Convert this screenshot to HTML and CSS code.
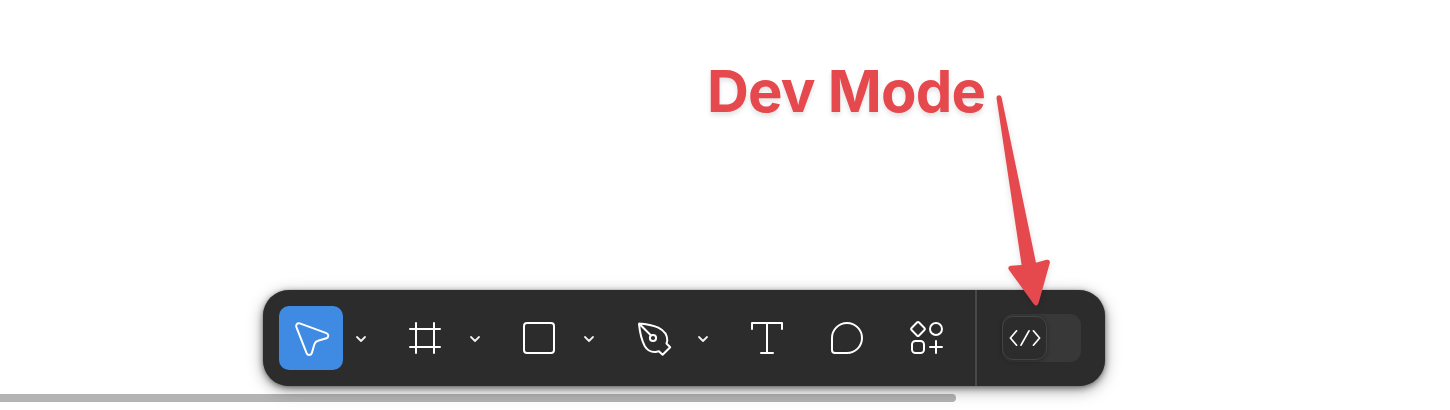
FILE: index.html
```html
<!DOCTYPE html>
<html lang="en">
<head>
<meta charset="utf-8">
<title>Dev Mode toolbar</title>
<link rel="stylesheet" href="styles.css">
</head>
<body>
<main class="canvas">
  <h1 class="callout">Dev Mode</h1>
  <nav class="toolbar">
    <div class="tools">
      <div class="tool-group">
        <button class="tool active" aria-label="Move"><svg class="icon" viewBox="0 0 64 64"><path d="M17.4 21.2C16.5 18.7 18.2 16.5 20.8 17.4L47.4 27.1C50 28.2 50 31.5 47.4 32.3L39 34.8Q36.3 35.6 35.4 38.3L32.9 46.8C32 49.8 28.6 49.6 27.6 47.1Z"/></svg></button>
        <button class="more" aria-label="More move tools"><svg class="chevron" viewBox="0 0 12 8"><path d="M2 2l4 4 4-4"/></svg></button>
      </div>
      <div class="tool-group">
        <button class="tool" aria-label="Frame"><svg class="icon" viewBox="0 0 64 64"><path d="M23 17v30M41 17v30M17 23h30M17 41h30"/></svg></button>
        <button class="more" aria-label="More frame tools"><svg class="chevron" viewBox="0 0 12 8"><path d="M2 2l4 4 4-4"/></svg></button>
      </div>
      <div class="tool-group">
        <button class="tool" aria-label="Rectangle"><svg class="icon" viewBox="0 0 64 64"><rect x="17" y="17" width="30" height="30" rx="3"/></svg></button>
        <button class="more" aria-label="More shapes"><svg class="chevron" viewBox="0 0 12 8"><path d="M2 2l4 4 4-4"/></svg></button>
      </div>
      <div class="tool-group">
        <button class="tool" aria-label="Pen"><svg class="icon" viewBox="0 0 64 64"><path d="M18 18.2Q18 17.3 19 17.5C25 18.2 32 19.2 37.3 21.7C43.5 24.8 46.3 29 46.3 34.5L45.5 37.5 49.2 41.2 41.6 48.8 37.9 45.2 34.5 46C29.5 46.3 26.2 44.3 23.7 40C20.5 34 18.8 26 18 18.2ZM18.5 18l11.3 11.3"/><circle cx="32" cy="32" r="3.1"/></svg></button>
        <button class="more" aria-label="More drawing tools"><svg class="chevron" viewBox="0 0 12 8"><path d="M2 2l4 4 4-4"/></svg></button>
      </div>
      <button class="tool" aria-label="Text"><svg class="icon" viewBox="0 0 64 64"><path d="M17 23v-6h30v6M32 17v30M26 47h12"/></svg></button>
      <button class="tool" aria-label="Comment"><svg class="icon" viewBox="0 0 64 64"><path d="M17 32a15 15 0 1 1 15 15H20a3 3 0 0 1-3-3Z"/></svg></button>
      <button class="tool" aria-label="Actions"><svg class="icon" viewBox="0 0 64 64"><rect x="17.7" y="17.7" width="10.6" height="10.6" rx="1.5" transform="rotate(45 23 23)"/><circle cx="41" cy="23" r="6"/><rect x="17" y="35" width="12" height="12" rx="3.5"/><path d="M41 35v12M35 41h12"/></svg></button>
    </div>
    <div class="mode">
      <button class="switch" aria-label="Dev Mode">
        <span class="knob"><svg class="code" viewBox="0 0 32 20"><path d="M7.6 2.8L1.4 10l6.2 7.2M20 2.8l-8 14.4M24.4 2.8l6.2 7.2-6.2 7.2"/></svg></span>
      </button>
    </div>
  </nav>
  <div class="scrollbar"></div>
  <svg class="arrow" viewBox="0 0 50 220"><path d="M6.5 8Q6.3 5.6 8.7 5.2 11.2 5.1 11.6 7.5L46 172.7 56.5 169.8Q60.3 169.4 59.8 173L48.6 213Q46.3 218 43.3 213.5L18.7 179.6Q17.3 176.2 20.8 175.8L31.6 175Z"/></svg>
</main>
</body>
</html>
```
FILE: styles.css
```css
* {
  box-sizing: border-box;
}

body {
  margin: 0;
  background: #fff;
  font-family: Inter, "Liberation Sans", sans-serif;
}

.canvas {
  position: relative;
  display: flex;
  flex-direction: column;
  align-items: flex-start;
  height: 410px;
  overflow: hidden;
}

.callout {
  margin: 56px 0 0 707px;
  height: 70px;
  color: #e5484d;
  font-size: 58px;
  font-weight: 700;
  line-height: 70px;
  letter-spacing: -0.8px;
  white-space: nowrap;
  text-shadow: 0 3px 5px rgba(0, 0, 0, 0.12);
}

.toolbar {
  display: flex;
  z-index: 1;
  width: 842px;
  height: 96px;
  margin: 164px 0 0 263px;
  border-radius: 26px;
  background: #2c2c2c;
  box-shadow: 0 0 1px rgba(0, 0, 0, 0.5), 0 2px 6px rgba(0, 0, 0, 0.45), 0 4px 16px rgba(0, 0, 0, 0.35);
}

.tools {
  display: flex;
  gap: 16px;
  width: 712px;
  padding: 16px;
}

.tool-group {
  display: flex;
  width: 98px;
}

.tool,
.more,
.switch {
  display: flex;
  flex: none;
  align-items: center;
  padding: 0;
  border: 0;
  background: none;
}

.tool {
  width: 64px;
  height: 64px;
  border-radius: 10px;
}

.active {
  background: #3f8ae2;
}

.more {
  width: 34px;
  padding: 2px 0 0 12px;
}

.icon,
.chevron,
.code {
  flex: none;
  fill: none;
  stroke: #fff;
  stroke-width: 2;
  stroke-linecap: round;
  stroke-linejoin: round;
}

.icon {
  width: 64px;
  height: 64px;
}

.chevron {
  width: 12px;
  height: 8px;
  stroke: #f0f0f0;
  stroke-width: 1.8;
}

.mode {
  display: flex;
  align-items: center;
  width: 130px;
  padding-left: 25px;
  border-left: 2px solid #484848;
}

.switch {
  width: 79px;
  height: 48px;
  border-radius: 11px;
  background: #383838;
}

.knob {
  display: flex;
  align-items: center;
  justify-content: center;
  width: 45px;
  height: 44px;
  border: 1px solid #444;
  border-radius: 11px;
  background: #2c2c2c;
  box-shadow: 0 1px 4px rgba(0, 0, 0, 0.3);
}

.code {
  width: 32px;
  height: 20px;
  stroke-width: 1.7;
}

.scrollbar {
  width: 956px;
  height: 8px;
  margin-top: 8px;
  border-radius: 0 4px 4px 0;
  background: #b4b4b4;
}

/* Callout pointer lies over the toolbar */
.arrow {
  position: absolute;
  z-index: 2;
  top: 90px;
  left: 990px;
  width: 50px;
  height: 220px;
  overflow: visible;
  fill: #e5484d;
  filter: drop-shadow(0 2px 3px rgba(0, 0, 0, 0.12));
}
```
